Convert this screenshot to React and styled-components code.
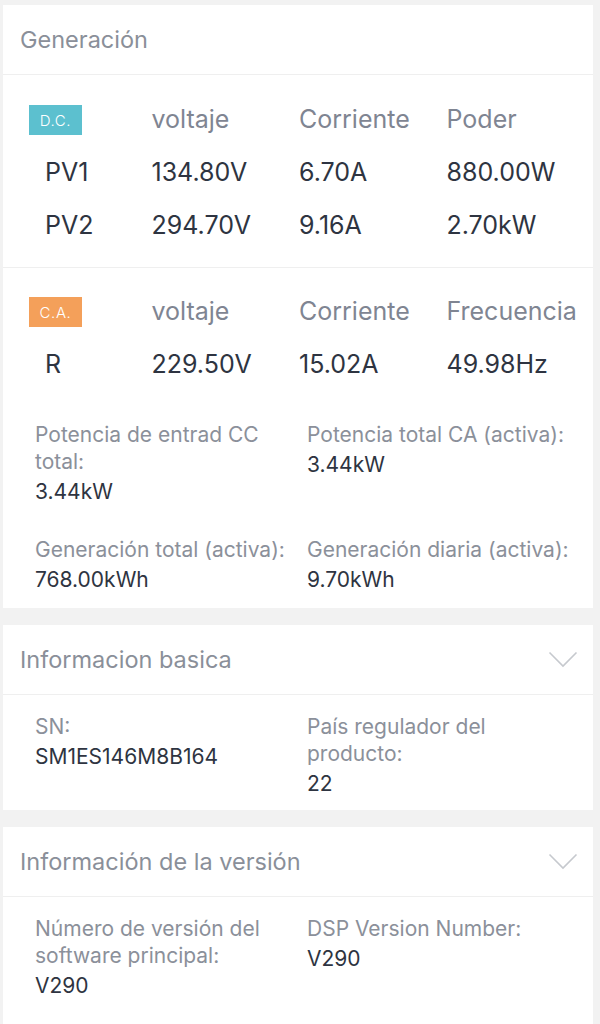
import React from "react";
import styled, { createGlobalStyle } from "styled-components";

const Global = createGlobalStyle`
  html, body { margin: 0; padding: 0; background: #f2f2f2; }
  body { font-family: Inter, "Noto Sans", "Liberation Sans", sans-serif; -webkit-font-smoothing: antialiased; }
  * { box-sizing: border-box; }
`;

const Page = styled.div`
  padding: 5px 7px 0 3px;
  display: flex;
  flex-direction: column;
  gap: 17px;
`;

const Card = styled.section`
  background: #ffffff;
`;

const CardHeader = styled.div`
  height: 70px;
  display: flex;
  align-items: center;
  justify-content: space-between;
  padding: 0 15px 0 17px;
  font-size: 23.5px;
  color: #8a8f99;
  border-bottom: 1px solid #efefef;
`;

const TableSection = styled.div`
  padding: ${(p) => (p.$first ? "17px 0 16px" : "16px 0 0")};
  border-top: ${(p) => (p.$first ? "none" : "1px solid #efefef")};
`;

const Row = styled.div`
  display: grid;
  grid-template-columns: repeat(4, 1fr);
  align-items: center;
  height: 53px;
  font-size: 25px;
  color: ${(p) => (p.$head ? "#7f8592" : "#2e3441")};
`;

const Cell = styled.div`
  padding-left: 1px;
  white-space: nowrap;
`;

const FirstCell = styled.div`
  padding-left: ${(p) => (p.$badge ? "26px" : "42px")};
`;

const Badge = styled.span`
  display: inline-flex;
  align-items: center;
  justify-content: center;
  width: 53px;
  height: 30px;
  background: ${(p) => p.$color};
  color: #ffffff;
  font-size: 15px;
  font-weight: 300;
  letter-spacing: 0.6px;
`;

const InfoGrid = styled.div`
  display: grid;
  grid-template-columns: 272px 1fr;
  row-gap: 31px;
  padding: ${(p) => p.$pad || "18px 14px 13px 32px"};
`;

const Item = styled.div`
  font-size: 21px;
  line-height: 27px;
`;

const Label = styled.div`
  color: #8b909a;
`;

const Value = styled.div`
  color: #2e3441;
  margin-top: 3px;
`;

const Chevron = () => (
  <svg width="30" height="17" viewBox="0 0 30 17" fill="none">
    <path d="M1.5 1.5 L15 15 L28.5 1.5" stroke="#c6c9ce" strokeWidth="1.6" />
  </svg>
);

const dc = [
  ["PV1", "134.80V", "6.70A", "880.00W"],
  ["PV2", "294.70V", "9.16A", "2.70kW"],
];

function Info({ label, value }) {
  return (
    <Item>
      <Label>{label}</Label>
      <Value>{value}</Value>
    </Item>
  );
}

export default function App() {
  return (
    <>
      <Global />
      <Page>
        <Card>
          <CardHeader>Generación</CardHeader>
          <TableSection $first>
            <Row $head>
              <FirstCell $badge>
                <Badge $color="#5cc0cf">D.C.</Badge>
              </FirstCell>
              <Cell>voltaje</Cell>
              <Cell>Corriente</Cell>
              <Cell>Poder</Cell>
            </Row>
            {dc.map((r) => (
              <Row key={r[0]}>
                <FirstCell>{r[0]}</FirstCell>
                <Cell>{r[1]}</Cell>
                <Cell>{r[2]}</Cell>
                <Cell>{r[3]}</Cell>
              </Row>
            ))}
          </TableSection>
          <TableSection>
            <Row $head>
              <FirstCell $badge>
                <Badge $color="#f4a05a">C.A.</Badge>
              </FirstCell>
              <Cell>voltaje</Cell>
              <Cell>Corriente</Cell>
              <Cell>Frecuencia</Cell>
            </Row>
            <Row>
              <FirstCell>R</FirstCell>
              <Cell>229.50V</Cell>
              <Cell>15.02A</Cell>
              <Cell>49.98Hz</Cell>
            </Row>
          </TableSection>
          <InfoGrid $pad="31px 14px 15px 32px">
            <Info label="Potencia de entrad CC total:" value="3.44kW" />
            <Info label="Potencia total CA (activa):" value="3.44kW" />
            <Info label="Generación total (activa):" value="768.00kWh" />
            <Info label="Generación diaria (activa):" value="9.70kWh" />
          </InfoGrid>
        </Card>

        <Card>
          <CardHeader>
            Informacion basica
            <Chevron />
          </CardHeader>
          <InfoGrid>
            <Info label="SN:" value="SM1ES146M8B164" />
            <Info label="País regulador del producto:" value="22" />
          </InfoGrid>
        </Card>

        <Card>
          <CardHeader>
            Información de la versión
            <Chevron />
          </CardHeader>
          <InfoGrid $pad="18px 14px 60px 32px">
            <Info label="Número de versión del software principal:" value="V290" />
            <Info label="DSP Version Number:" value="V290" />
          </InfoGrid>
        </Card>
      </Page>
    </>
  );
}
